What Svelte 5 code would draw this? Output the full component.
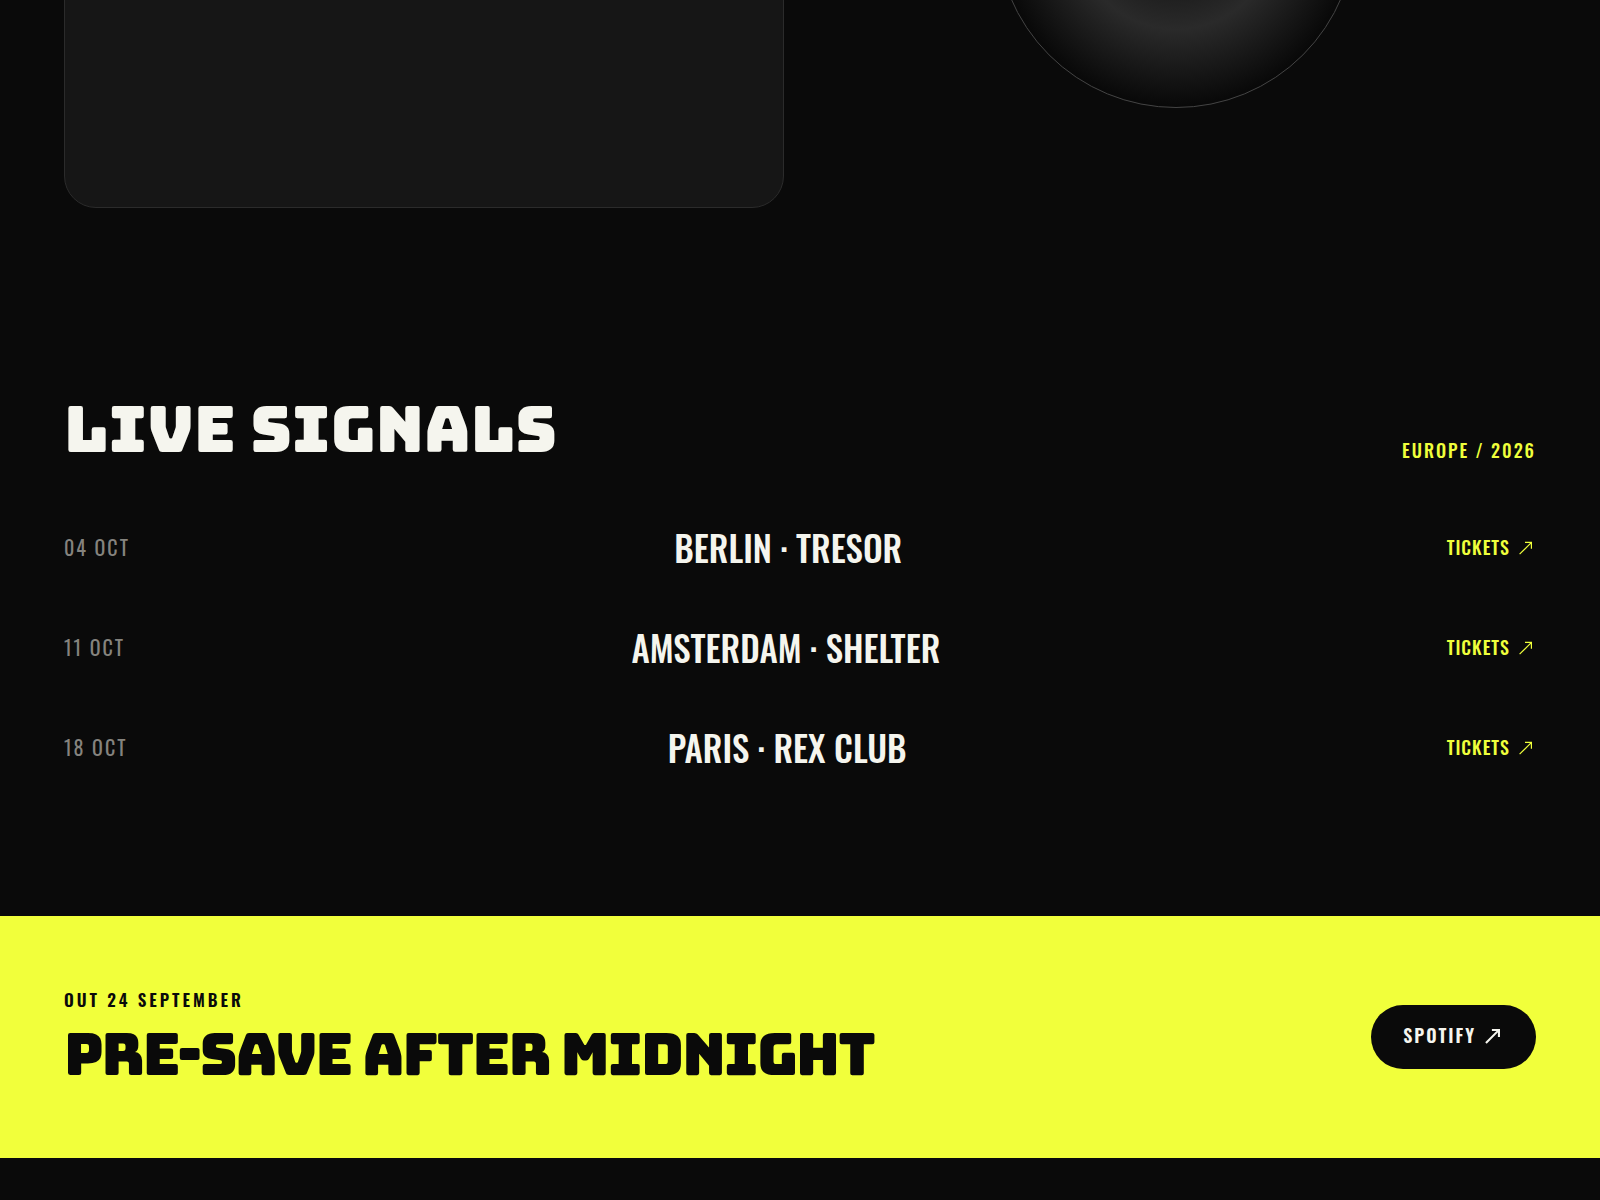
<script lang="ts">
	type Show = { date: string; place: string };

	const shows: Show[] = [
		{ date: '04 OCT', place: 'BERLIN · TRESOR' },
		{ date: '11 OCT', place: 'AMSTERDAM · SHELTER' },
		{ date: '18 OCT', place: 'PARIS · REX CLUB' }
	];
</script>

{#snippet arrow(size: number, weight: number)}
	<svg
		width={size}
		height={size}
		viewBox="0 0 20 20"
		fill="none"
		stroke="currentColor"
		stroke-width={weight}
		aria-hidden="true"
	>
		<path d="M3.6 17.2 15 5.8M9 5.4h6.4v6.4" />
	</svg>
{/snippet}

<main>
	<section class="release">
		<div class="panel"></div>
		<div class="stage">
			<div class="disc"></div>
		</div>
	</section>

	<section class="live">
		<header>
			<h2>LIVE SIGNALS</h2>
			<span class="region">EUROPE / 2026</span>
		</header>
		<ul>
			{#each shows as show}
				<li>
					<time>{show.date}</time>
					<strong>{show.place}</strong>
					<a href="#tickets">TICKETS {@render arrow(20, 1.2)}</a>
				</li>
			{/each}
		</ul>
	</section>

	<section class="presave">
		<div>
			<p>OUT 24 SEPTEMBER</p>
			<h2>PRE-SAVE AFTER MIDNIGHT</h2>
		</div>
		<a href="#spotify" class="pill">SPOTIFY {@render arrow(22, 1.9)}</a>
	</section>
</main>

<style>
	:global(body) {
		margin: 0;
		background: #0a0a0a;
	}
	main {
		overflow: hidden;
		min-height: 100vh;
		background: #0a0a0a;
		color: #f5f5ee;
		font-family: Oswald, 'Liberation Sans Narrow', Roboto, sans-serif;
	}
	h2,
	p,
	ul {
		margin: 0;
		padding: 0;
	}
	h2 {
		font-family: Bungee, 'DejaVu Sans', sans-serif;
		font-weight: 400;
	}
	a {
		display: flex;
		align-items: center;
		gap: 6px;
		color: inherit;
		text-decoration: none;
	}
	.release {
		display: grid;
		grid-template-columns: 1fr 1fr;
		gap: 32px;
		padding: 0 64px;
		/* the section starts above the fold */
		margin-top: -352px;
	}
	.panel {
		box-sizing: border-box;
		min-height: 560px;
		border: 1px solid #2b2b2b;
		border-radius: 32px;
		background: #161616;
	}
	.stage {
		display: grid;
		place-items: center;
	}
	.disc {
		box-sizing: border-box;
		width: 50%;
		aspect-ratio: 1;
		border: 1px solid #444;
		border-radius: 50%;
		background: radial-gradient(circle, #111 10%, #2a2a2a 40%, #090909 70%);
	}
	.live {
		padding: 186px 64px 119px;
	}
	.live header {
		display: flex;
		justify-content: space-between;
		align-items: flex-end;
		margin-bottom: 33px;
	}
	.live h2 {
		font-size: 64px;
		line-height: 70px;
	}
	.region {
		color: #efff3b;
		font-size: 18px;
		font-weight: 500;
		line-height: 28px;
		letter-spacing: 2px;
	}
	ul {
		list-style: none;
	}
	li {
		display: flex;
		justify-content: space-between;
		align-items: center;
		height: 100px;
	}
	time {
		color: #85837e;
		font-size: 20px;
		letter-spacing: 2px;
	}
	strong {
		font-size: 35px;
		font-weight: 500;
	}
	li a {
		color: #efff3b;
		font-size: 18px;
		font-weight: 500;
		letter-spacing: 1px;
	}
	.presave {
		display: flex;
		justify-content: space-between;
		align-items: center;
		padding: 70px 64px;
		background: #f1ff3b;
		color: #0a0a0a;
	}
	.presave p {
		margin-bottom: 6px;
		font-size: 17px;
		font-weight: 600;
		line-height: 28px;
		letter-spacing: 3px;
	}
	.presave h2 {
		font-size: 58px;
		line-height: 68px;
		letter-spacing: -2px;
	}
	.pill {
		padding: 18px 32px 22px;
		border-radius: 32px;
		background: #0a0a0a;
		color: #f5f5ee;
		font-size: 18px;
		font-weight: 600;
		line-height: 24px;
		letter-spacing: 2px;
	}
</style>
